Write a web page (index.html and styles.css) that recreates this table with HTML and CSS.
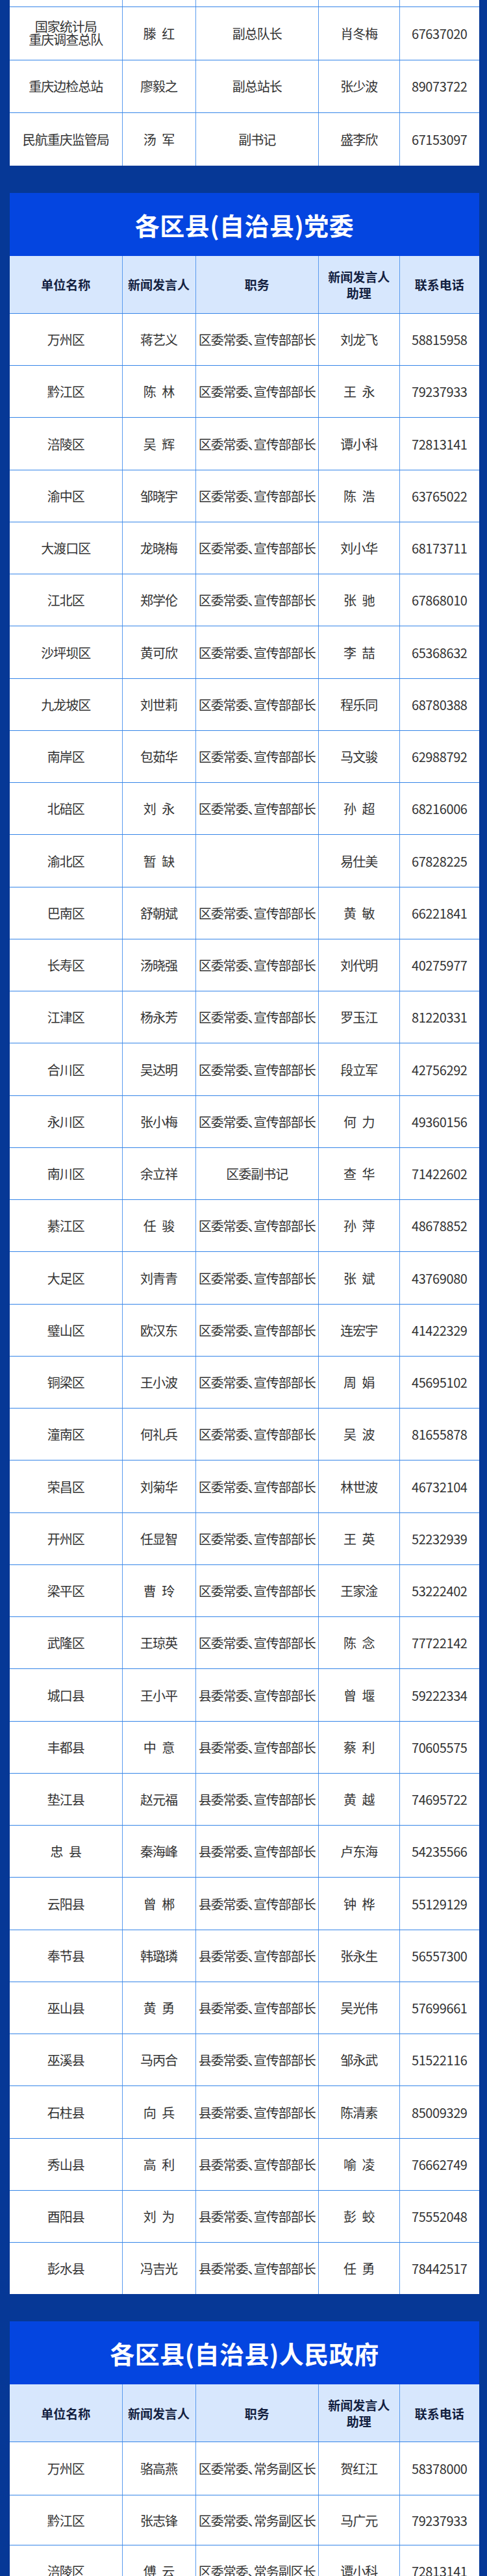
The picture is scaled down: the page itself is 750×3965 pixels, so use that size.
FILE: index.html
```html
<!DOCTYPE html>
<html lang="zh-CN">
<head>
<meta charset="utf-8">
<title>新闻发言人名单</title>
<link rel="stylesheet" href="styles.css">
</head>
<body>
<div class="page">

  <section class="card">
    <div class="row stub"><div class="cell"></div><div class="cell"></div><div class="cell"></div><div class="cell"></div><div class="cell"></div></div>
    <div class="row row-lg"><div class="cell two"><span class="ln">国家统计局</span><span class="ln">重庆调查总队</span></div><div class="cell">滕 红</div><div class="cell pos">副总队长</div><div class="cell">肖冬梅</div><div class="cell num">67637020</div></div>
    <div class="row row-lg"><div class="cell">重庆边检总站</div><div class="cell">廖毅之</div><div class="cell pos">副总站长</div><div class="cell">张少波</div><div class="cell num">89073722</div></div>
    <div class="row row-lg"><div class="cell">民航重庆监管局</div><div class="cell">汤 军</div><div class="cell pos">副书记</div><div class="cell">盛李欣</div><div class="cell num">67153097</div></div>
  </section>

  <section class="card">
    <h2 class="card-title">各区县(自治县)党委</h2>
    <div class="row head"><div class="cell">单位名称</div><div class="cell">新闻发言人</div><div class="cell">职务</div><div class="cell">新闻发言人<br>助理</div><div class="cell">联系电话</div></div>
    <div class="row"><div class="cell">万州区</div><div class="cell">蒋艺义</div><div class="cell pos">区委常委、宣传部部长</div><div class="cell">刘龙飞</div><div class="cell num">58815958</div></div>
    <div class="row"><div class="cell">黔江区</div><div class="cell">陈 林</div><div class="cell pos">区委常委、宣传部部长</div><div class="cell">王 永</div><div class="cell num">79237933</div></div>
    <div class="row"><div class="cell">涪陵区</div><div class="cell">吴 辉</div><div class="cell pos">区委常委、宣传部部长</div><div class="cell">谭小科</div><div class="cell num">72813141</div></div>
    <div class="row"><div class="cell">渝中区</div><div class="cell">邹晓宇</div><div class="cell pos">区委常委、宣传部部长</div><div class="cell">陈 浩</div><div class="cell num">63765022</div></div>
    <div class="row"><div class="cell">大渡口区</div><div class="cell">龙晓梅</div><div class="cell pos">区委常委、宣传部部长</div><div class="cell">刘小华</div><div class="cell num">68173711</div></div>
    <div class="row"><div class="cell">江北区</div><div class="cell">郑学伦</div><div class="cell pos">区委常委、宣传部部长</div><div class="cell">张 驰</div><div class="cell num">67868010</div></div>
    <div class="row"><div class="cell">沙坪坝区</div><div class="cell">黄可欣</div><div class="cell pos">区委常委、宣传部部长</div><div class="cell">李 喆</div><div class="cell num">65368632</div></div>
    <div class="row"><div class="cell">九龙坡区</div><div class="cell">刘世莉</div><div class="cell pos">区委常委、宣传部部长</div><div class="cell">程乐同</div><div class="cell num">68780388</div></div>
    <div class="row"><div class="cell">南岸区</div><div class="cell">包茹华</div><div class="cell pos">区委常委、宣传部部长</div><div class="cell">马文骏</div><div class="cell num">62988792</div></div>
    <div class="row"><div class="cell">北碚区</div><div class="cell">刘 永</div><div class="cell pos">区委常委、宣传部部长</div><div class="cell">孙 超</div><div class="cell num">68216006</div></div>
    <div class="row"><div class="cell">渝北区</div><div class="cell">暂 缺</div><div class="cell pos"></div><div class="cell">易仕美</div><div class="cell num">67828225</div></div>
    <div class="row"><div class="cell">巴南区</div><div class="cell">舒朝斌</div><div class="cell pos">区委常委、宣传部部长</div><div class="cell">黄 敏</div><div class="cell num">66221841</div></div>
    <div class="row"><div class="cell">长寿区</div><div class="cell">汤晓强</div><div class="cell pos">区委常委、宣传部部长</div><div class="cell">刘代明</div><div class="cell num">40275977</div></div>
    <div class="row"><div class="cell">江津区</div><div class="cell">杨永芳</div><div class="cell pos">区委常委、宣传部部长</div><div class="cell">罗玉江</div><div class="cell num">81220331</div></div>
    <div class="row"><div class="cell">合川区</div><div class="cell">吴达明</div><div class="cell pos">区委常委、宣传部部长</div><div class="cell">段立军</div><div class="cell num">42756292</div></div>
    <div class="row"><div class="cell">永川区</div><div class="cell">张小梅</div><div class="cell pos">区委常委、宣传部部长</div><div class="cell">何 力</div><div class="cell num">49360156</div></div>
    <div class="row"><div class="cell">南川区</div><div class="cell">余立祥</div><div class="cell pos">区委副书记</div><div class="cell">查 华</div><div class="cell num">71422602</div></div>
    <div class="row"><div class="cell">綦江区</div><div class="cell">任 骏</div><div class="cell pos">区委常委、宣传部部长</div><div class="cell">孙 萍</div><div class="cell num">48678852</div></div>
    <div class="row"><div class="cell">大足区</div><div class="cell">刘青青</div><div class="cell pos">区委常委、宣传部部长</div><div class="cell">张 斌</div><div class="cell num">43769080</div></div>
    <div class="row"><div class="cell">璧山区</div><div class="cell">欧汉东</div><div class="cell pos">区委常委、宣传部部长</div><div class="cell">连宏宇</div><div class="cell num">41422329</div></div>
    <div class="row"><div class="cell">铜梁区</div><div class="cell">王小波</div><div class="cell pos">区委常委、宣传部部长</div><div class="cell">周 娟</div><div class="cell num">45695102</div></div>
    <div class="row"><div class="cell">潼南区</div><div class="cell">何礼兵</div><div class="cell pos">区委常委、宣传部部长</div><div class="cell">吴 波</div><div class="cell num">81655878</div></div>
    <div class="row"><div class="cell">荣昌区</div><div class="cell">刘菊华</div><div class="cell pos">区委常委、宣传部部长</div><div class="cell">林世波</div><div class="cell num">46732104</div></div>
    <div class="row"><div class="cell">开州区</div><div class="cell">任显智</div><div class="cell pos">区委常委、宣传部部长</div><div class="cell">王 英</div><div class="cell num">52232939</div></div>
    <div class="row"><div class="cell">梁平区</div><div class="cell">曹 玲</div><div class="cell pos">区委常委、宣传部部长</div><div class="cell">王家淦</div><div class="cell num">53222402</div></div>
    <div class="row"><div class="cell">武隆区</div><div class="cell">王琼英</div><div class="cell pos">区委常委、宣传部部长</div><div class="cell">陈 念</div><div class="cell num">77722142</div></div>
    <div class="row"><div class="cell">城口县</div><div class="cell">王小平</div><div class="cell pos">县委常委、宣传部部长</div><div class="cell">曾 堰</div><div class="cell num">59222334</div></div>
    <div class="row"><div class="cell">丰都县</div><div class="cell">中 意</div><div class="cell pos">县委常委、宣传部部长</div><div class="cell">蔡 利</div><div class="cell num">70605575</div></div>
    <div class="row"><div class="cell">垫江县</div><div class="cell">赵元福</div><div class="cell pos">县委常委、宣传部部长</div><div class="cell">黄 越</div><div class="cell num">74695722</div></div>
    <div class="row"><div class="cell">忠 县</div><div class="cell">秦海峰</div><div class="cell pos">县委常委、宣传部部长</div><div class="cell">卢东海</div><div class="cell num">54235566</div></div>
    <div class="row"><div class="cell">云阳县</div><div class="cell">曾 郴</div><div class="cell pos">县委常委、宣传部部长</div><div class="cell">钟 桦</div><div class="cell num">55129129</div></div>
    <div class="row"><div class="cell">奉节县</div><div class="cell">韩璐璘</div><div class="cell pos">县委常委、宣传部部长</div><div class="cell">张永生</div><div class="cell num">56557300</div></div>
    <div class="row"><div class="cell">巫山县</div><div class="cell">黄 勇</div><div class="cell pos">县委常委、宣传部部长</div><div class="cell">吴光伟</div><div class="cell num">57699661</div></div>
    <div class="row"><div class="cell">巫溪县</div><div class="cell">马丙合</div><div class="cell pos">县委常委、宣传部部长</div><div class="cell">邹永武</div><div class="cell num">51522116</div></div>
    <div class="row"><div class="cell">石柱县</div><div class="cell">向 兵</div><div class="cell pos">县委常委、宣传部部长</div><div class="cell">陈清素</div><div class="cell num">85009329</div></div>
    <div class="row"><div class="cell">秀山县</div><div class="cell">高 利</div><div class="cell pos">县委常委、宣传部部长</div><div class="cell">喻 凌</div><div class="cell num">76662749</div></div>
    <div class="row"><div class="cell">酉阳县</div><div class="cell">刘 为</div><div class="cell pos">县委常委、宣传部部长</div><div class="cell">彭 蛟</div><div class="cell num">75552048</div></div>
    <div class="row"><div class="cell">彭水县</div><div class="cell">冯吉光</div><div class="cell pos">县委常委、宣传部部长</div><div class="cell">任 勇</div><div class="cell num">78442517</div></div>
  </section>

  <section class="card">
    <h2 class="card-title">各区县(自治县)人民政府</h2>
    <div class="row head"><div class="cell">单位名称</div><div class="cell">新闻发言人</div><div class="cell">职务</div><div class="cell">新闻发言人<br>助理</div><div class="cell">联系电话</div></div>
    <div class="row row-lg"><div class="cell">万州区</div><div class="cell">骆高燕</div><div class="cell pos">区委常委、常务副区长</div><div class="cell">贺红江</div><div class="cell num">58378000</div></div>
    <div class="row row-sm"><div class="cell">黔江区</div><div class="cell">张志锋</div><div class="cell pos">区委常委、常务副区长</div><div class="cell">马广元</div><div class="cell num">79237933</div></div>
    <div class="row"><div class="cell">涪陵区</div><div class="cell">傅 云</div><div class="cell pos">区委常委、常务副区长</div><div class="cell">谭小科</div><div class="cell num">72813141</div></div>
  </section>

</div>
</body>
</html>
```

FILE: styles.css
```css
html, body {
  margin: 0;
  padding: 0;
}

body {
  background: #063896;
  font-family: "Noto Sans CJK SC", "Noto Sans", sans-serif;
}

.page {
  height: 3965px;
  overflow: hidden;
  padding: 0 12px 0 15px;
  box-sizing: border-box;
}

.card {
  background: #ffffff;
}

.card + .card {
  margin-top: 42px;
}

.card-title {
  margin: 0;
  height: 97px;
  display: flex;
  align-items: center;
  justify-content: center;
  background: #0445e0;
  color: #ffffff;
  font-size: 38px;
  font-weight: 700;
  letter-spacing: 0.5px;
}

.row {
  display: grid;
  grid-template-columns: 172.5px 113px 189.5px 124.5px 1fr;
  height: 80.26px;
  box-sizing: border-box;
  border-top: 1px solid #3585e8;
}

.row-lg {
  height: 81.67px;
}

.row-sm {
  height: 77px;
}

.stub {
  height: 10px;
  border-top: 0;
}

.head {
  height: 88px;
  border-top: 0;
  background: #d7e7fd;
}

.cell {
  display: flex;
  align-items: center;
  justify-content: center;
  text-align: center;
  border-left: 1px solid #5a9bef;
  color: #333333;
  font-size: 20px;
  letter-spacing: -1px;
  word-spacing: 6px;
  white-space: nowrap;
}

.cell:first-child {
  border-left: 0;
}

.two {
  flex-direction: column;
  gap: 0;
}

.two .ln {
  display: block;
  height: 20px;
  line-height: 20px;
}

.pos {
  font-feature-settings: "palt";
}

.num {
  letter-spacing: -0.4px;
}

.head .cell {
  font-weight: 700;
  color: #13203f;
  font-size: 19px;
  line-height: 25px;
  letter-spacing: 0;
}
```
